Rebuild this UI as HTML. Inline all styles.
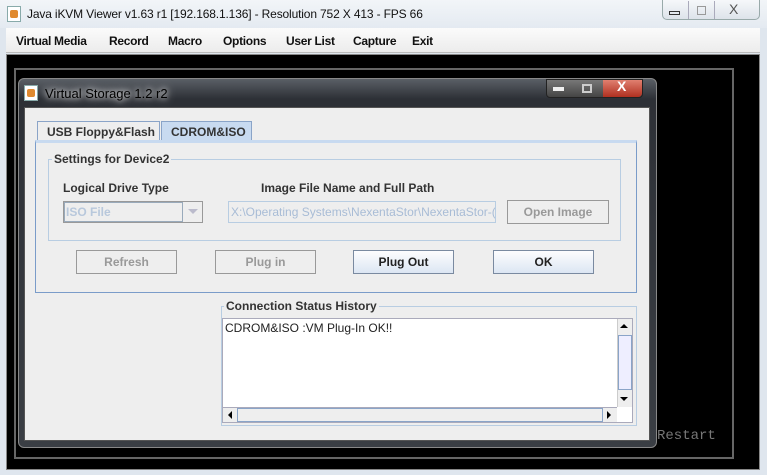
<!DOCTYPE html>
<html><head><style>
*{margin:0;padding:0;box-sizing:border-box}
body{width:767px;height:475px;overflow:hidden;background:#dfe6ee;font-family:"Liberation Sans",sans-serif;position:relative}
.a{position:absolute}
.t{font-size:13px;color:#000}
.m{position:absolute;top:34px;font-size:12px;font-weight:bold;color:#111;letter-spacing:-0.3px}
.b{font-weight:bold;font-size:12px;color:#333}
.btn{position:absolute;height:24px;border:1px solid #999;background:#eee;font:bold 12px "Liberation Sans",sans-serif;color:#999;text-align:center;line-height:22px}
.btn.on{border-color:#7a8aa0;background:linear-gradient(#fdfdfe,#dce6f3);color:#222}
</style></head><body>
<div class="a" style="left:0;top:0;width:767px;height:28px;background:linear-gradient(#f2f5f8,#e4eaf1)"></div>
<div class="a" style="left:7px;top:6px;width:14px;height:16px;background:#fff;border:1px solid #8aa;"><div style="margin:3px 2px;height:8px;background:#e08a30;border-radius:2px"></div></div>
<div class="a t" style="left:27px;top:7px;font-size:12px;letter-spacing:-0.15px;color:#111">Java iKVM Viewer v1.63 r1 [192.168.1.136] - Resolution 752 X 413 - FPS 66</div>
<div class="a" style="left:662px;top:0;width:98px;height:20px;border:1px solid #9aa;border-top:none;border-radius:0 0 5px 5px;background:linear-gradient(#f6f8fa,#dde3ea)"></div>
<div class="a" style="left:688px;top:1px;width:1px;height:18px;background:#aab"></div>
<div class="a" style="left:714px;top:1px;width:1px;height:18px;background:#aab"></div>
<div class="a" style="left:669px;top:11px;width:11px;height:4px;border:1px solid #333"></div>
<div class="a" style="left:697px;top:6px;width:9px;height:9px;border:1px solid #999"></div>
<div class="a" style="left:729px;top:1px;font-size:14px;color:#555">X</div>
<div class="a" style="left:6px;top:28px;width:754px;height:25px;background:linear-gradient(#fbfbfb,#ececec);border-bottom:1px solid #bbb"></div>
<div class="m" style="left:16px">Virtual Media</div>
<div class="m" style="left:109px">Record</div>
<div class="m" style="left:168px">Macro</div>
<div class="m" style="left:223px">Options</div>
<div class="m" style="left:286px">User List</div>
<div class="m" style="left:353px">Capture</div>
<div class="m" style="left:412px">Exit</div>
<div class="a" style="left:6px;top:54px;width:754px;height:416px;background:#000;border:1px solid #888"></div>
<div class="a" style="left:14px;top:68px;width:720px;height:391px;border:2px solid #666"></div>
<div class="a" style="left:657px;top:428px;font:14px 'Liberation Mono',monospace;color:#777">Restart</div>
<!-- dialog -->
<div class="a" style="left:18px;top:78px;width:639px;height:370px;border-radius:6px;background:linear-gradient(#5a5f66,#2d3036 20px,#3a3e44);border:1px solid #888"></div>
<div class="a" style="left:24px;top:85px;width:14px;height:16px;background:#fff;border:1px solid #8aa"><div style="margin:3px 2px;height:8px;background:#e08a30;border-radius:2px"></div></div>
<div class="a" style="left:45px;top:86px;font-size:13px;color:#000;text-shadow:0 0 6px #fff,0 0 10px #fff">Virtual Storage 1.2 r2</div>
<div class="a" style="left:546px;top:79px;width:97px;height:19px;border-radius:0 0 4px 4px;background:linear-gradient(#777,#444);border:1px solid #222"></div>
<div class="a" style="left:603px;top:80px;width:39px;height:17px;background:linear-gradient(#e08070,#b03020);border-radius:0 0 4px 0"></div>
<div class="a" style="left:553px;top:87px;width:11px;height:4px;background:#eee"></div>
<div class="a" style="left:582px;top:84px;width:10px;height:9px;border:2px solid #ccc"></div>
<div class="a" style="left:617px;top:78px;font-size:14px;font-weight:bold;color:#fff">X</div>
<div class="a" style="left:24px;top:107px;width:626px;height:334px;background:#eee;border:1px solid #555"></div>
<!-- tabs -->
<div class="a" style="left:37px;top:121px;width:123px;height:20px;border:1px solid #8aa4c8;border-bottom:none;background:#eee;font-size:12px;font-weight:bold;color:#333;padding:3px 0 0 9px">USB Floppy&amp;Flash</div>
<div class="a" style="left:161px;top:121px;width:91px;height:20px;border:1px solid #8aa4c8;border-bottom:none;background:#c8daf0;font-size:12px;font-weight:bold;color:#333;padding:3px 0 0 9px">CDROM&amp;ISO</div>
<div class="a" style="left:35px;top:140px;width:602px;height:153px;border:1px solid #7a9cc9;border-top:3px solid #c8daf0"></div>
<div class="a" style="left:48px;top:159px;width:573px;height:82px;border:1px solid #b8cde2"></div>
<div class="a b" style="left:52px;top:152px;background:#eee;padding:0 2px">Settings for Device2</div>
<div class="a b" style="left:63px;top:181px">Logical Drive Type</div>
<div class="a b" style="left:261px;top:181px">Image File Name and Full Path</div>
<div class="a" style="left:63px;top:201px;width:140px;height:22px;border:1px solid #999;background:#eee"></div>
<div class="a" style="left:64px;top:202px;width:119px;height:20px;border:1px solid #9ab;font-size:12px;font-weight:bold;color:#b8c8dc;padding:2px 0 0 1px">ISO File</div>
<div class="a" style="left:188px;top:209px;border-left:5px solid transparent;border-right:5px solid transparent;border-top:5px solid #bbc"></div>
<div class="a" style="left:228px;top:201px;width:268px;height:22px;border:1px solid #b8cde2;font-size:12px;color:#a8bcd6;padding:3px 0 0 2px;overflow:hidden;white-space:nowrap">X:\Operating Systems\NexentaStor\NexentaStor-(</div>
<div class="btn" style="left:507px;top:200px;width:102px">Open Image</div>
<div class="btn" style="left:76px;top:250px;width:101px">Refresh</div>
<div class="btn" style="left:215px;top:250px;width:101px">Plug in</div>
<div class="btn on" style="left:353px;top:250px;width:101px">Plug Out</div>
<div class="btn on" style="left:493px;top:250px;width:101px">OK</div>
<!-- status -->
<div class="a" style="left:221px;top:306px;width:416px;height:120px;border:1px solid #b8cde2"></div>
<div class="a b" style="left:224px;top:299px;background:#eee;padding:0 2px">Connection Status History</div>
<div class="a" style="left:222px;top:318px;width:411px;height:105px;background:#fff;border:1px solid #aab"></div>
<div class="a" style="left:225px;top:321px;font-size:12px;color:#222">CDROM&amp;ISO :VM Plug-In OK!!</div>
<div class="a" style="left:617px;top:319px;width:15px;height:88px;background:#eee;border-left:1px solid #ccc"></div>
<div class="a" style="left:618px;top:335px;width:14px;height:55px;border:1px solid #8aa4c8;background:#eef"></div>
<div class="a" style="left:620px;top:324px;border-left:4px solid transparent;border-right:4px solid transparent;border-bottom:4px solid #000"></div>
<div class="a" style="left:620px;top:397px;border-left:4px solid transparent;border-right:4px solid transparent;border-top:4px solid #000"></div>
<div class="a" style="left:223px;top:407px;width:394px;height:15px;background:#eee;border-top:1px solid #aab"></div>
<div class="a" style="left:237px;top:408px;width:366px;height:14px;border:1px solid #8aa4c8"></div>
<div class="a" style="left:228px;top:411px;border-top:4px solid transparent;border-bottom:4px solid transparent;border-right:4px solid #000"></div>
<div class="a" style="left:607px;top:411px;border-top:4px solid transparent;border-bottom:4px solid transparent;border-left:4px solid #000"></div>
</body></html>
